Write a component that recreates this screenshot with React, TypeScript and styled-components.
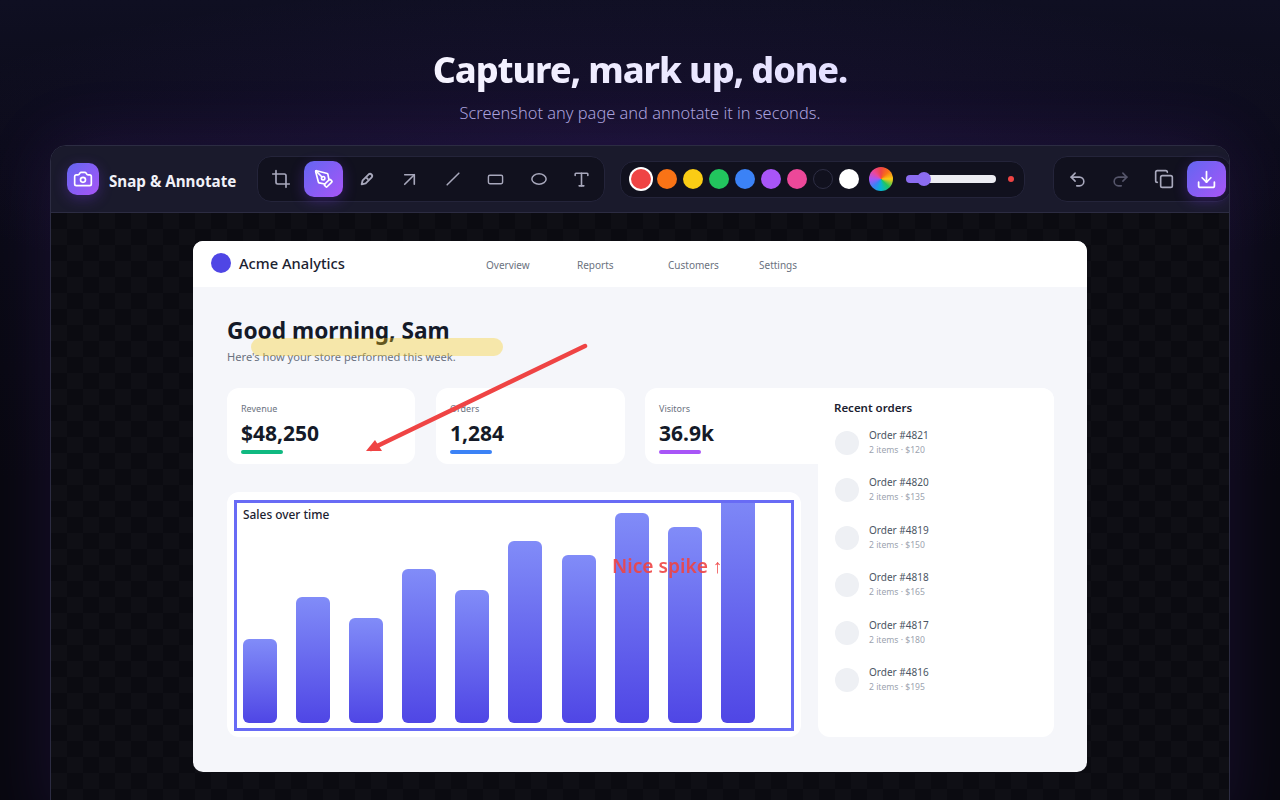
import React from "react";
import styled, { createGlobalStyle } from "styled-components";
import {
  ArrowUpRight,
  Camera,
  Copy,
  Crop,
  Download,
  PenTool,
  RectangleHorizontal,
  Redo2,
  Slash,
  Type,
  Undo2,
} from "lucide-react";

const GlobalStyle = createGlobalStyle`
  html, body {
    margin: 0;
    height: 100%;
    background: #08080f;
  }
  * {
    box-sizing: border-box;
  }
`;

const Page = styled.div`
  width: 1280px;
  height: 800px;
  overflow: hidden;
  padding: 0 50px;
  font-family: "Noto Sans", "Open Sans", sans-serif;
  background:
    radial-gradient(ellipse 760px 170px at 640px 150px, rgba(124, 58, 237, 0.11), transparent 100%),
    linear-gradient(180deg, #0f0f22 0%, #0b0b18 18%, #08080f 60%, #08080f 100%);
`;

const Hero = styled.header`
  height: 145px;
  padding-top: 45px;
  text-align: center;
`;

const Title = styled.h1`
  margin: 0 auto;
  width: fit-content;
  font-size: 36px;
  line-height: 50px;
  font-weight: 800;
  letter-spacing: -1.1px;
  background: linear-gradient(90deg, #f6f4ff, #e4e0ff);
  -webkit-background-clip: text;
  background-clip: text;
  color: transparent;
`;

const Subtitle = styled.p`
  margin: 6px 0 0;
  font-size: 16.4px;
  line-height: 24px;
  font-weight: 300;
  color: #aaa1de;
`;

const Window = styled.section`
  height: 680px;
  border: 1px solid #2c2c42;
  border-radius: 16px 16px 0 0;
  overflow: hidden;
  box-shadow: 0 0 70px rgba(124, 58, 237, 0.14);
`;

const Toolbar = styled.div`
  display: flex;
  align-items: center;
  height: 67px;
  padding-left: 16px;
  background: #1a1a2c;
  border-bottom: 1px solid #2c2c42;
`;

const Brand = styled.div`
  display: flex;
  align-items: center;
  gap: 10px;
  width: 190px;
  flex-shrink: 0;
`;

const BrandName = styled.span`
  padding-top: 3px;
  color: #f1f1f8;
  font-size: 15.2px;
  font-weight: 700;
`;

const BrandIcon = styled.div`
  display: grid;
  place-items: center;
  width: 32px;
  height: 32px;
  border-radius: 10px;
  color: #fff;
  background: linear-gradient(135deg, #6366f1, #a855f7);
  box-shadow: 0 4px 14px rgba(124, 58, 237, 0.3);
`;

const Group = styled.div<{ $left?: number; $pad: number }>`
  display: flex;
  align-items: center;
  flex-shrink: 0;
  gap: 4px;
  height: 46px;
  padding: 0 ${(p) => p.$pad}px;
  margin-left: ${(p) => p.$left ?? 0}px;
  background: #11111e;
  border: 1px solid #24243a;
  border-radius: 14px;
`;

const ToolButton = styled.div<{ $active?: boolean; $dim?: boolean }>`
  display: grid;
  place-items: center;
  width: 39px;
  height: 36px;
  border-radius: 10px;
  color: ${(p) => (p.$active ? "#fff" : p.$dim ? "#55556a" : "#a8a8bc")};
  background: ${(p) => (p.$active ? "linear-gradient(135deg, #6366f1, #a855f7)" : "transparent")};
  box-shadow: ${(p) => (p.$active ? "0 4px 14px rgba(124, 58, 237, 0.3)" : "none")};
`;

const ColorGroup = styled.div`
  display: flex;
  align-items: center;
  flex-shrink: 0;
  gap: 6px;
  height: 37px;
  width: 405px;
  margin-left: 15px;
  padding: 0 10px;
  background: #11111e;
  border: 1px solid #24243a;
  border-radius: 14px;
`;

const Swatch = styled.div<{ $color: string; $selected?: boolean; $outlined?: boolean }>`
  width: 20px;
  height: 20px;
  flex-shrink: 0;
  border-radius: 50%;
  background: ${(p) => p.$color};
  border: ${(p) => (p.$outlined ? "1px solid #2e2e44" : "none")};
  box-shadow: ${(p) => (p.$selected ? "0 0 0 2px #fff" : "none")};
`;

const ColorWheel = styled.div`
  width: 24px;
  height: 24px;
  flex-shrink: 0;
  margin-left: 4px;
  border-radius: 50%;
  background: conic-gradient(#ef4444, #f97316, #facc15, #22c55e, #06b6d4, #3b82f6, #a855f7, #ec4899, #ef4444);
`;

const Slider = styled.div`
  position: relative;
  width: 90px;
  height: 8px;
  flex-shrink: 0;
  margin-left: 7px;
  border-radius: 4px;
  background: linear-gradient(90deg, #8b6cf0 0 20%, #ececf2 20% 100%);
`;

const Thumb = styled.div`
  position: absolute;
  left: 11px;
  top: -3px;
  width: 14px;
  height: 14px;
  border-radius: 50%;
  background: #8b6cf0;
`;

const SizeDot = styled.div`
  width: 6px;
  height: 6px;
  flex-shrink: 0;
  margin-left: 6px;
  border-radius: 50%;
  background: #ef4444;
`;

const Canvas = styled.div`
  height: 612px;
  padding-top: 28px;
  background-color: #0b0b11;
  background-image:
    linear-gradient(45deg, #0f0f15 25%, transparent 25%, transparent 75%, #0f0f15 75%),
    linear-gradient(45deg, #0f0f15 25%, transparent 25%, transparent 75%, #0f0f15 75%);
  background-size: 32px 32px;
  background-position: 0 0, 16px 16px;
`;

const Doc = styled.article`
  position: relative;
  width: 894px;
  height: 531px;
  margin: 0 auto;
  border-radius: 10px;
  overflow: hidden;
  background: #f5f6fa;
`;

const DocHeader = styled.div`
  display: flex;
  align-items: center;
  height: 46px;
  padding: 0 18px 2px;
  background: #fff;
`;

const DocBrand = styled.div`
  display: flex;
  align-items: center;
  gap: 8px;
  width: 275px;
  font-size: 14.7px;
  font-weight: 500;
  color: #1c2230;
`;

const DocDot = styled.div`
  width: 20px;
  height: 20px;
  border-radius: 50%;
  background: #4f46e5;
`;

const Nav = styled.nav`
  display: grid;
  grid-template-columns: repeat(4, 91px);
  padding-top: 4px;
  font-size: 10px;
  color: #6b7280;
`;

const DocBody = styled.div`
  padding: 29px 33px 0 34px;
`;

const Greeting = styled.h2`
  margin: 0;
  font-size: 22.7px;
  line-height: 30px;
  font-weight: 700;
  color: #141a28;
`;

const GreetingSub = styled.p`
  margin: 3px 0 0;
  font-size: 11.15px;
  line-height: 16px;
  color: #6b7280;
`;

const Board = styled.div`
  display: grid;
  grid-template-columns: 188px 21px 189px 20px 156px 17px 236px;
  grid-template-rows: 76px 28px 245px;
  margin-top: 23px;
`;

const StatCard = styled.div<{ $col: string }>`
  grid-column: ${(p) => p.$col};
  grid-row: 1;
  padding: 14px 14px 0;
  border-radius: 12px;
  background: #fff;
`;

const StatLabel = styled.div`
  font-size: 9px;
  line-height: 13px;
  color: #6b7280;
`;

const StatValue = styled.div`
  margin-top: 5px;
  font-size: 21px;
  line-height: 26px;
  font-weight: 700;
  color: #141a28;
`;

const StatBar = styled.div<{ $color: string }>`
  width: 42px;
  height: 4px;
  margin-top: 4px;
  border-radius: 2px;
  background: ${(p) => p.$color};
`;

const ChartCard = styled.div`
  grid-column: 1 / 6;
  grid-row: 3;
  display: grid;
  padding: 8px 16px 14px;
  border-radius: 12px;
  background: #fff;
`;

const ChartTitle = styled.div`
  grid-area: 1 / 1;
  z-index: 1;
  padding-top: 6px;
  font-size: 11.9px;
  line-height: 16px;
  font-weight: 500;
  color: #1c2230;
`;

const Bars = styled.div`
  grid-area: 1 / 1;
  display: flex;
  align-items: flex-end;
  gap: 19.1px;
  height: 223px;
  overflow: hidden;
`;

const Bar = styled.div`
  width: 34px;
  flex-shrink: 0;
  border-radius: 6px;
  background: linear-gradient(180deg, #818cf8, #4f46e5);
`;

const OrdersPanel = styled.aside`
  grid-column: 7;
  grid-row: 1 / 4;
  z-index: 1;
  padding: 12px 16px 0 17px;
  border-radius: 0 12px 12px 12px;
  background: #fff;
`;

const OrdersTitle = styled.div`
  margin-left: -1px;
  font-size: 11.5px;
  line-height: 16px;
  font-weight: 600;
  color: #1c2230;
`;

const OrderList = styled.div`
  display: flex;
  flex-direction: column;
  gap: 15.5px;
  margin-top: 10px;
`;

const OrderRow = styled.div`
  display: flex;
  align-items: center;
  gap: 10px;
  height: 32px;
`;

const Avatar = styled.div`
  width: 24px;
  height: 24px;
  margin-top: 1px;
  border-radius: 50%;
  background: #eef0f4;
`;

const OrderName = styled.div`
  font-size: 10px;
  line-height: 15px;
  color: #4b5563;
`;

const OrderMeta = styled.div`
  font-size: 8.6px;
  line-height: 14px;
  color: #9ca3af;
`;

const Highlight = styled.div`
  position: absolute;
  left: 58px;
  top: 97px;
  width: 252px;
  height: 18px;
  border-radius: 9px;
  background: rgba(250, 204, 21, 0.35);
`;

const Frame = styled.div`
  position: absolute;
  left: 41px;
  top: 259px;
  width: 560px;
  height: 231px;
  border: 3px solid #686bf5;
`;

const Note = styled.div`
  position: absolute;
  left: 419px;
  top: 312px;
  font-size: 19.2px;
  line-height: 26px;
  font-weight: 600;
  color: #ef4444;
  opacity: 0.9;
`;

const ArrowMark = styled.svg`
  position: absolute;
  left: 160px;
  top: 90px;
`;

const MarkerIcon = () => (
  <svg width="16" height="16" viewBox="0 0 24 24" fill="none" stroke="currentColor" strokeWidth="2.8" strokeLinejoin="round">
    <path d="M4 20l1.5-6L14.5 5a3.2 3.2 0 0 1 4.5 4.5L10 18.5z" />
    <path d="M11 10l3 3" />
  </svg>
);

const EllipseIcon = () => (
  <svg width="18" height="18" viewBox="0 0 24 24" fill="none" stroke="currentColor" strokeWidth="2">
    <ellipse cx="12" cy="12" rx="9.5" ry="7" />
  </svg>
);

const tools = [
  { key: "crop", icon: <Crop size={20} /> },
  { key: "pen", icon: <PenTool size={20} />, active: true },
  { key: "marker", icon: <MarkerIcon /> },
  { key: "arrow", icon: <ArrowUpRight size={23} strokeWidth={1.7} /> },
  { key: "line", icon: <Slash size={14} strokeWidth={2.6} /> },
  { key: "rect", icon: <RectangleHorizontal size={17} /> },
  { key: "ellipse", icon: <EllipseIcon /> },
  { key: "text", icon: <Type size={19} /> },
];

const colors = ["#ef4444", "#f97316", "#facc15", "#22c55e", "#3b82f6", "#a855f7", "#ec4899", "#11111e", "#ffffff"];

const barHeights = [84, 126, 105, 154, 133, 182, 168, 210, 196, 238];

const orders = [
  { id: 4821, total: 120 },
  { id: 4820, total: 135 },
  { id: 4819, total: 150 },
  { id: 4818, total: 165 },
  { id: 4817, total: 180 },
  { id: 4816, total: 195 },
];

export default function App() {
  return (
    <>
      <GlobalStyle />
      <Page>
        <Hero>
          <Title>Capture, mark up, done.</Title>
          <Subtitle>Screenshot any page and annotate it in seconds.</Subtitle>
        </Hero>
        <Window>
          <Toolbar>
            <Brand>
              <BrandIcon>
                <Camera size={20} />
              </BrandIcon>
              <BrandName>Snap &amp; Annotate</BrandName>
            </Brand>
            <Group $pad={3}>
              {tools.map((t) => (
                <ToolButton key={t.key} $active={t.active}>
                  {t.icon}
                </ToolButton>
              ))}
            </Group>
            <ColorGroup>
              {colors.map((c, i) => (
                <Swatch key={c} $color={c} $selected={i === 0} $outlined={c === "#11111e"} />
              ))}
              <ColorWheel />
              <Slider>
                <Thumb />
              </Slider>
              <SizeDot />
            </ColorGroup>
            <Group $left={28} $pad={4}>
              <ToolButton>
                <Undo2 size={19} />
              </ToolButton>
              <ToolButton $dim>
                <Redo2 size={19} />
              </ToolButton>
              <ToolButton>
                <Copy size={20} />
              </ToolButton>
              <ToolButton $active>
                <Download size={21} />
              </ToolButton>
            </Group>
          </Toolbar>
          <Canvas>
            <Doc>
              <DocHeader>
                <DocBrand>
                  <DocDot />
                  Acme Analytics
                </DocBrand>
                <Nav>
                  <span>Overview</span>
                  <span>Reports</span>
                  <span>Customers</span>
                  <span>Settings</span>
                </Nav>
              </DocHeader>
              <DocBody>
                <Greeting>Good morning, Sam</Greeting>
                <GreetingSub>Here's how your store performed this week.</GreetingSub>
                <Board>
                  <StatCard $col="1">
                    <StatLabel>Revenue</StatLabel>
                    <StatValue>$48,250</StatValue>
                    <StatBar $color="#10b981" />
                  </StatCard>
                  <StatCard $col="3">
                    <StatLabel>Orders</StatLabel>
                    <StatValue>1,284</StatValue>
                    <StatBar $color="#3b82f6" />
                  </StatCard>
                  <StatCard $col="5 / 8">
                    <StatLabel>Visitors</StatLabel>
                    <StatValue>36.9k</StatValue>
                    <StatBar $color="#a855f7" />
                  </StatCard>
                  <ChartCard>
                    <ChartTitle>Sales over time</ChartTitle>
                    <Bars>
                      {barHeights.map((h, i) => (
                        <Bar key={i} style={{ height: h }} />
                      ))}
                    </Bars>
                  </ChartCard>
                  <OrdersPanel>
                    <OrdersTitle>Recent orders</OrdersTitle>
                    <OrderList>
                      {orders.map((o) => (
                        <OrderRow key={o.id}>
                          <Avatar />
                          <div>
                            <OrderName>Order #{o.id}</OrderName>
                            <OrderMeta>2 items · ${o.total}</OrderMeta>
                          </div>
                        </OrderRow>
                      ))}
                    </OrderList>
                  </OrdersPanel>
                </Board>
              </DocBody>
              <Highlight />
              <Frame />
              <Note>Nice spike ↑</Note>
              <ArrowMark width="240" height="130" viewBox="0 0 240 130" fill="none">
                <path d="M232 15 L18 118" stroke="#ef4444" strokeWidth="4.5" strokeLinecap="round" />
                <path d="M13 120 L29 120 L22 109 Z" fill="#ef4444" />
              </ArrowMark>
            </Doc>
          </Canvas>
        </Window>
      </Page>
    </>
  );
}
